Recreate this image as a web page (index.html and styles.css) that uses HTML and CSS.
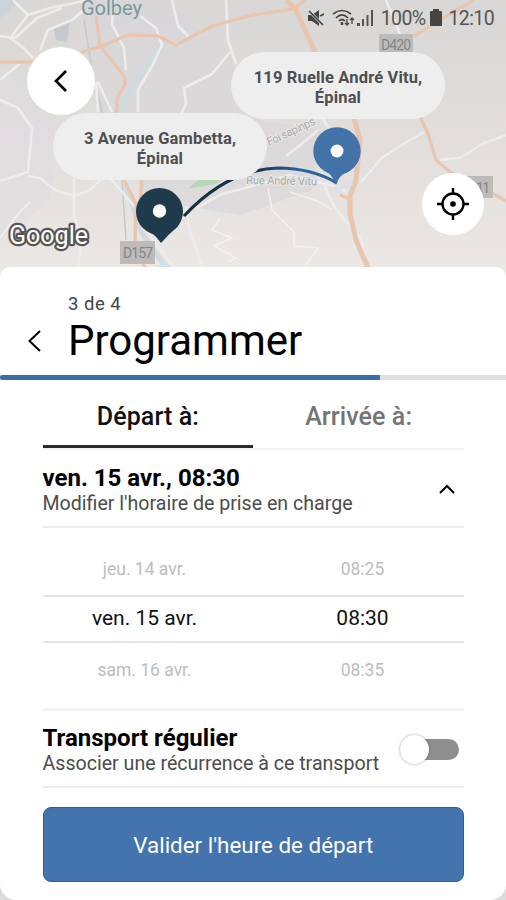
FILE: index.html
```html
<!DOCTYPE html>
<html lang="fr">
<head>
<meta charset="UTF-8">
<meta name="viewport" content="width=device-width, initial-scale=1.0">
<title>Programmer</title>
<link rel="stylesheet" href="styles.css">
</head>
<body>
    <div class="map">
        <svg class="map-canvas" viewBox="0 0 506 290" width="506" height="290">
            <defs>
                <linearGradient id="ground" x1="0" y1="0" x2="0" y2="1">
                    <stop offset="0" stop-color="#d9d7d5"/>
                    <stop offset="0.5" stop-color="#e1dedc"/>
                    <stop offset="1" stop-color="#ece9e6"/>
                </linearGradient>
                <linearGradient id="route" x1="185" y1="0" x2="337" y2="0" gradientUnits="userSpaceOnUse">
                    <stop offset="0.45" stop-color="#15303f"/>
                    <stop offset="0.75" stop-color="#2b62a0"/>
                </linearGradient>
            </defs>
            <rect width="506" height="290" fill="url(#ground)"/>

            <!-- built-up areas -->
            <path d="M80 0H170L232 60L258 120L320 130L312 190L240 215L150 200L100 130L88 50Z" fill="#d9d6db" opacity=".6"/>
            <path d="M0 60L30 100L60 140L50 200L0 240Z" fill="#e0dce1" opacity=".6"/>
            <path d="M53 27L70 23L67 42L56 40Z" fill="#c6c9ce"/>
            <path d="M0 0H18L8 14L0 18Z" fill="#cbd5d9"/>
            <path d="M188 189L198 180L222 178L216 184Z" fill="#b9d8b6"/>

            <!-- river -->
            <path class="river" d="M165 42L150 62L133 82L122 108L124 180L140 230L165 266"/>
            <path class="rail" d="M84 20L92 70L104 120L122 180L126 240"/>

            <!-- local roads -->
            <g class="road">
                <path d="M13 0L28 15L50 8L88 0"/>
                <path d="M28 15L10 38L24 48L33 58"/>
                <path d="M0 36L15 38L37 18L62 8"/>
                <path d="M0 80L22 62"/>
                <path d="M40 50L48 30L72 20L84 10"/>
                <path d="M0 100L18 108L32 128L28 172L0 181"/>
                <path d="M28 176L40 178L55 190L74 196L90 190L104 176"/>
                <path d="M74 178V214L82 240L78 268"/>
                <path d="M96 82L98 112M98 82L112 112"/>
                <path d="M114 0L112 24L124 48L126 70"/>
                <path d="M140 16L156 28L162 45L152 66L138 90L138 112"/>
                <path d="M172 0L178 26L190 38"/>
                <path d="M226 0L228 40L236 64"/>
                <path d="M230 52L212 74L184 88L186 104L180 116"/>
                <path d="M110 178L134 206L152 238L174 268"/>
                <path d="M186 206L190 232L204 270"/>
                <path d="M196 208L222 194L245 188L290 175L330 185L346 191"/>
                <path d="M324 184L332 202L338 212L362 240L366 268"/>
                <path d="M361 182L382 158L400 146L424 132"/>
                <path d="M440 160L460 158L482 144L506 135"/>
                <path d="M318 130L304 142L286 156"/>
                <path d="M322 118L330 130"/>
                <path d="M386 0L400 34"/>
            </g>
            <g class="path">
                <path d="M220 218L212 230L232 238L214 246L236 258L228 262"/>
                <path d="M268 188L272 210L294 232L294 246L318 248L304 268"/>
                <path d="M290 192L320 202L332 210"/>
                <path d="M0 238L18 214L30 202"/>
            </g>

            <!-- main roads -->
            <g class="main-road">
                <path d="M0 62L60 62L88 50L102 46L128 35L158 36L176 45L212 26L253 15L292 9L306 0"/>
                <path d="M96 16L100 46L124 76L125 84L117 98L117 114"/>
                <path d="M124 180L136 204L135 244L145 268"/>
                <path d="M142 180L140 204"/>
                <path d="M286 0L296 10L316 54" stroke-width="5"/>
                <path d="M414 36L440 20L474 0"/>
                <path d="M354 118L360 140L356 180L350 196L350 214L356 240L368 268" stroke-width="5"/>
                <path d="M420 116L428 134L436 160L450 172L478 190L494 194L506 201"/>
                <path d="M340 195L350 199"/>
            </g>
            <path d="M334 190L344 186L352 182" stroke="#dfe0e7" stroke-width="6" fill="none"/>
            <path d="M155 268L166 262L174 268Z" fill="#cfe2f1"/>

            <!-- labels -->
            <text class="town" x="81" y="14.500" textLength="61">Golbey</text>
            <rect x="379" y="34" width="34" height="19" fill="#bcbbbb"/>
            <text class="shield" x="381" y="50" textLength="30">D420</text>
            <rect x="120" y="241" width="35" height="23" fill="#bcbbba"/>
            <text class="shield" x="123" y="258" textLength="30">D157</text>
            <rect x="467" y="176" width="26" height="22" fill="#bcbbba"/>
            <text class="shield" x="476" y="193" textLength="14">11</text>
            <text class="street" x="246" y="184" textLength="71" transform="rotate(1 246 184)">Rue André Vitu</text>
            <text class="street" x="269" y="146" textLength="52" transform="rotate(-25 269 146)">Foi sapinps</text>

            <!-- route between both stops -->
            <path d="M184 216C210 188 242 169 278 168C300 168 320 173 337 183" fill="none" stroke="url(#route)" stroke-width="3.200"/>

            <g fill="#1f3a4a">
                <circle cx="159.500" cy="211.500" r="23.500"/>
                <path d="M146 230Q154 233 161 243Q168 235 178 226Z"/>
            </g>
            <circle cx="159.500" cy="211" r="6.700" fill="#fff"/>
            <g fill="#4272a8">
                <circle cx="337" cy="151" r="23.700"/>
                <path d="M322 168Q331 173 336 184Q340 174 349 171Z"/>
            </g>
            <circle cx="337" cy="151" r="6.500" fill="#fff"/>

            <text class="google" x="9" y="244" textLength="79" lengthAdjust="spacingAndGlyphs">Google</text>
        </svg>

        <div class="status-bar">
            <svg width="16" height="18" viewBox="0 0 16 18">
                <path d="M0 6H4L11 1V17L4 12H0Z" fill="#444"/>
                <path d="M1 2L15 16" stroke="#dad8d7" stroke-width="3"/>
                <path d="M1 2L15 16M12 7L16 5" stroke="#444" stroke-width="1.700"/>
            </svg>
            <svg class="wifi" width="23" height="18" viewBox="0 0 23 18" fill="none" stroke="#444" stroke-width="1.700">
                <path d="M1 5Q10-2 19 5M4 9Q10 3 16 9M7 12Q10 9 13 12"/>
                <path d="M10 13V16" stroke-width="2.500"/>
                <path d="M15 10V16M13 14L15 16L17 14M20 15V9M18 11L20 9L22 11" stroke-width="1.300"/>
            </svg>
            <svg width="17" height="18" viewBox="0 0 17 18" fill="#555">
                <path d="M0 14H3V17H0ZM5 10H7V17H5ZM9.500 6H11.500V17H9.500ZM14 1H16V17H14Z"/>
            </svg>
            <span class="percent">100%</span>
            <svg class="battery" width="12" height="18" viewBox="0 0 12 18">
                <path d="M3 0H9V2H11Q12 2 12 3V16Q12 17 11 17H1Q0 17 0 16V3Q0 2 1 2H3Z" fill="#444"/>
            </svg>
            <span class="clock">12:10</span>
        </div>

        <button class="round-button back-button" aria-label="Retour">
            <svg width="16" height="24" viewBox="0 0 16 24"><path d="M13 2L3 12L13 22" fill="none" stroke="#000" stroke-width="2.700"/></svg>
        </button>
        <button class="round-button locate-button" aria-label="Ma position">
            <svg width="32" height="32" viewBox="0 0 32 32" fill="none" stroke="#000" stroke-width="2.400">
                <circle cx="16" cy="16" r="10.500"/>
                <circle cx="16" cy="16" r="2.800" fill="#000" stroke="none"/>
                <path d="M16 0V6M16 26V32M0 16H6M26 16H32"/>
            </svg>
        </button>

        <div class="bubble bubble-from">3 Avenue Gambetta,<br>Épinal</div>
        <div class="bubble bubble-to">119 Ruelle André Vitu,<br>Épinal</div>
    </div>

    <div class="sheet">
        <div class="sheet-header">
            <svg class="sheet-back" width="16" height="24" viewBox="0 0 16 24"><path d="M14 2L3.500 12L14 22" fill="none" stroke="#000" stroke-width="2"/></svg>
            <div>
                <div class="step">3 de 4</div>
                <h1>Programmer</h1>
            </div>
        </div>
        <div class="progress"><div class="progress-value"></div></div>

        <div class="content">
            <div class="tabs">
                <div class="tab tab-active"><span>Départ à:</span></div>
                <div class="tab"><span>Arrivée à:</span></div>
            </div>

            <div class="row row-time">
                <div>
                    <div class="row-title">ven. 15 avr., 08:30</div>
                    <div class="row-text">Modifier l'horaire de prise en charge</div>
                </div>
                <svg class="chevron" width="18" height="12" viewBox="0 0 18 12"><path d="M2 10L9 3L16 10" fill="none" stroke="#000" stroke-width="2"/></svg>
            </div>

            <div class="picker">
                <div class="picker-row"><span>jeu. 14 avr.</span><span>08:25</span></div>
                <div class="picker-row selected"><span>ven. 15 avr.</span><span>08:30</span></div>
                <div class="picker-row"><span>sam. 16 avr.</span><span>08:35</span></div>
            </div>

            <div class="row row-regular">
                <div>
                    <div class="row-title">Transport régulier</div>
                    <div class="row-text">Associer une récurrence à ce transport</div>
                </div>
                <div class="switch"><div class="switch-thumb"></div></div>
            </div>

            <button class="submit">Valider l'heure de départ</button>
        </div>
    </div>
</body>
</html>
```
FILE: styles.css
```css
* {
    box-sizing: border-box;
}
body {
    margin: 0;
    height: 900px;
    overflow: hidden;
    background: #dcdcdc;
    font-family: Roboto, "Liberation Sans", sans-serif;
    color: #000;
}
button {
    padding: 0;
    border: none;
    font-family: inherit;
}

/* Map */
.map {
    position: relative;
    height: 267px;
}
.map-canvas {
    display: block;
}
.road {
    fill: none;
    stroke: #ededed;
    stroke-width: 2.6;
    stroke-linejoin: round;
}
.path {
    fill: none;
    stroke: #f3f2f0;
    stroke-width: 1.5;
}
.main-road {
    fill: none;
    stroke: #e8c5ae;
    stroke-width: 3.3;
    stroke-linejoin: round;
}
.river {
    fill: none;
    stroke: #cfdbdd;
    stroke-width: 5;
}
.rail {
    fill: none;
    stroke: #c6c9cb;
    stroke-width: 1.5;
}
.town {
    font-size: 20px;
    fill: #76999b;
}
.shield {
    font-size: 14px;
    fill: #858585;
}
.street {
    font-size: 11.5px;
    fill: #a8a8aa;
    stroke: #e8e8e8;
    stroke-width: 2;
    paint-order: stroke;
}
.google {
    font-size: 26px;
    font-weight: 400;
    fill: #fff;
    stroke: #555;
    stroke-width: 4.5;
    stroke-linejoin: round;
    paint-order: stroke;
}

.status-bar {
    position: absolute;
    top: 8px;
    right: 12px;
    display: flex;
    align-items: center;
    height: 20px;
    color: #555;
    font-size: 19.5px;
}
.wifi {
    margin-left: 8px;
}
.wifi + svg {
    margin-left: 2px;
}
.percent {
    margin-left: 7px;
    letter-spacing: -0.6px;
}
.battery {
    margin: 0 6px 0 5px;
}
.clock {
    letter-spacing: -0.6px;
}

.round-button {
    position: absolute;
    display: flex;
    align-items: center;
    justify-content: center;
    border-radius: 50%;
    background: #fff;
}
.back-button {
    top: 47px;
    left: 27px;
    width: 68px;
    height: 68px;
}
.locate-button {
    top: 173px;
    left: 422px;
    width: 62px;
    height: 62px;
}
.bubble {
    position: absolute;
    width: 214px;
    height: 67px;
    padding-top: 16px;
    border-radius: 34px;
    background: #eeeeee;
    color: #4f4f4f;
    font-size: 16.5px;
    font-weight: 700;
    letter-spacing: 0.15px;
    line-height: 20px;
    text-align: center;
    white-space: nowrap;
}
.bubble-from {
    top: 113px;
    left: 53px;
}
.bubble-to {
    top: 52px;
    left: 231px;
}

/* Bottom sheet */
.sheet {
    position: relative;
    height: 633px;
    border-radius: 10px 10px 16px 16px;
    background: #fff;
    overflow: hidden;
}
.sheet-header {
    display: flex;
    height: 108px;
    padding: 26px 0 0 26px;
}
.sheet-back {
    margin: 36px 26px 0 0;
}
.step {
    color: #444;
    font-size: 18.5px;
    letter-spacing: 0.5px;
    line-height: 22px;
}
h1 {
    margin: 1px 0 0;
    font-size: 42px;
    font-weight: 400;
    line-height: 49px;
}
.progress {
    height: 5px;
    background: #e0e0e0;
}
.progress-value {
    width: 380px;
    height: 5px;
    border-radius: 3px 0 0 3px;
    background: #3a6ea8;
}
.content {
    padding: 0 42px 0 42.5px;
}
.tabs {
    display: flex;
    height: 70px;
    border-bottom: 2px solid #f1f1f1;
}
.tab {
    width: 50%;
    height: 68px;
    padding-top: 21px;
    color: #757575;
    font-size: 25px;
    font-weight: 500;
    letter-spacing: 0.1px;
    line-height: 31px;
    text-align: center;
}
.tab-active {
    border-bottom: 3px solid #2a2a2a;
    color: #111;
}
.row {
    display: flex;
    justify-content: space-between;
    border-bottom: 2px solid #ececec;
}
.row-time {
    height: 78px;
    padding-top: 14px;
}
.row-regular {
    height: 77px;
    padding-top: 13px;
}
.row-title {
    font-size: 24px;
    font-weight: 700;
    line-height: 28px;
}
.row-text {
    color: #4c4c4c;
    font-size: 19.6px;
    line-height: 23px;
    white-space: nowrap;
}
.chevron {
    margin: 19px 8px 0 0;
}
.picker {
    height: 183px;
    padding-top: 13px;
    border-bottom: 3px solid #f1f1f1;
}
.picker-row {
    display: flex;
    height: 54px;
    color: #bdbdbd;
    font-size: 17.5px;
    line-height: 56px;
}
.picker-row span {
    width: 217px;
    padding-left: 15px;
    text-align: center;
}
.picker-row span:first-child {
    flex-shrink: 0;
    width: 204px;
    padding-left: 0;
}
.picker-row:last-child {
    line-height: 54px;
}
.picker-row.selected {
    height: 48px;
    border-top: 2px solid #e4e4e4;
    border-bottom: 2px solid #e4e4e4;
    color: #111;
    font-size: 21px;
    line-height: 43px;
}
.switch {
    width: 59px;
    height: 21px;
    margin: 15px 5px 0 0;
    border-radius: 11px;
    background: #8f8f8f;
}
.switch-thumb {
    width: 29px;
    height: 29px;
    margin-top: -4px;
    border-radius: 50%;
    background: #fff;
    box-shadow: 0 0 3px rgba(0, 0, 0, 0.35);
}
.submit {
    display: block;
    width: 100%;
    height: 75px;
    margin-top: 19px;
    border: 1px solid #2562a3;
    border-radius: 8px;
    background: #4374ad;
    color: #fff;
    font-size: 22.4px;
}
```
